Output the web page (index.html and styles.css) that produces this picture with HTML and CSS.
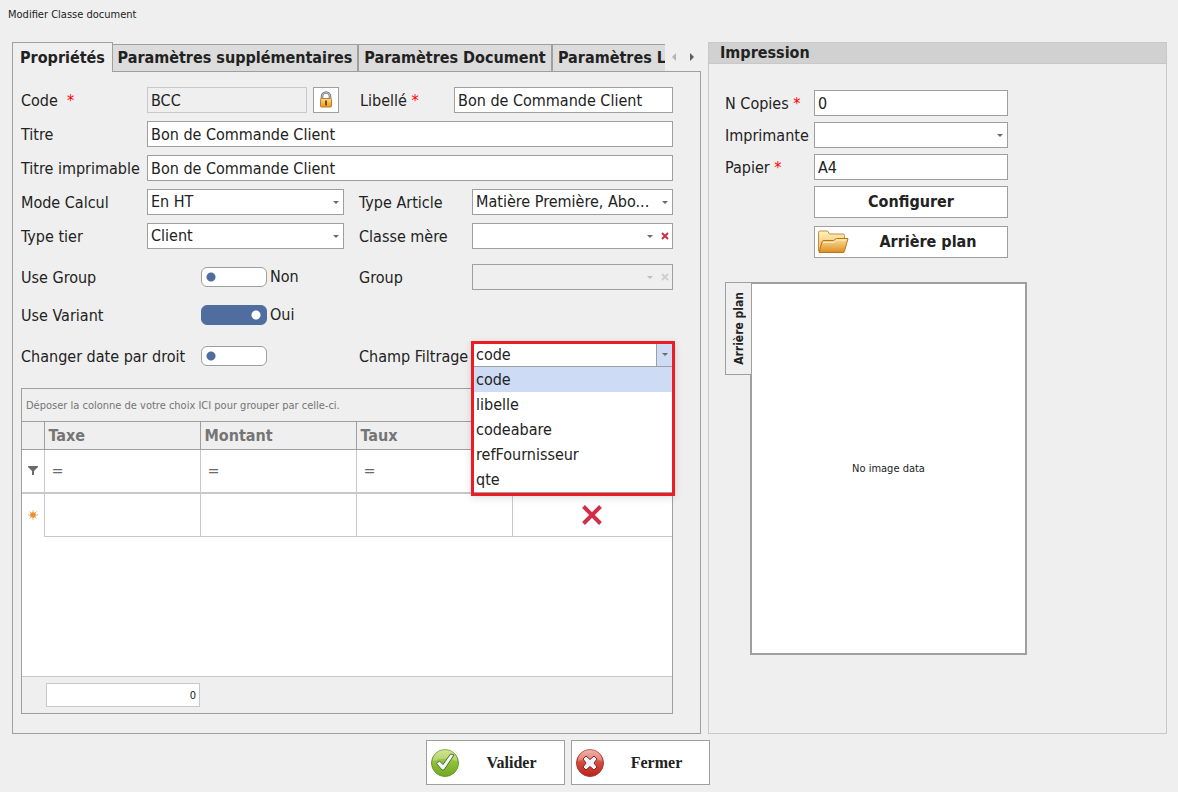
FILE: index.html
```
<!DOCTYPE html>
<html lang="fr">
<head>
<meta charset="utf-8">
<title>Modifier Classe document</title>
<link rel="stylesheet" href="styles.css">
</head>
<body>
<form class="window">
  <h1 class="window-title">Modifier Classe document</h1>
  <main class="panels">
    <section class="left">
      <div class="tabstrip">
        <div class="tabs" role="tablist">
          <button type="button" class="tab tab-first active" role="tab" aria-selected="true">Propriétés</button>
          <button type="button" class="tab tab-wide" role="tab">Paramètres supplémentaires</button>
          <button type="button" class="tab tab-medium" role="tab">Paramètres Document</button>
          <button type="button" class="tab tab-rest" role="tab">Paramètres L</button>
        </div>
        <button type="button" class="nav prev" aria-label="Précédent" disabled></button>
        <button type="button" class="nav next" aria-label="Suivant"></button>
      </div>
      <div class="tab-page">
        <div class="row row-code">
          <label for="code">Code &nbsp;<span class="req">*</span></label>
          <input id="code" class="field" value="BCC" disabled>
          <button type="button" class="lock" aria-label="Verrouiller">
            <svg width="16" height="18" viewBox="0 0 16 18">
              <defs><linearGradient id="gold" x1="0" y1="0" x2="0" y2="1"><stop offset="0" stop-color="#fbdc8c"/><stop offset="1" stop-color="#e59a24"/></linearGradient></defs>
              <path d="M4 9V5.500a4 4 0 0 1 8 0V9" fill="none" stroke="#6d7379" stroke-width="2.600"/>
              <path d="M4 9V5.500a4 4 0 0 1 8 0V9" fill="none" stroke="#c3c8cc" stroke-width="1"/>
              <rect x="2.500" y="7.500" width="11" height="8.500" rx="1" fill="url(#gold)" stroke="#c47b1d"/>
              <path d="M7 9.500h2v5H7z" fill="#7a4b16"/>
            </svg>
          </button>
          <label for="libelle">Libellé <span class="req">*</span></label>
          <input id="libelle" class="field" value="Bon de Commande Client">
        </div>
        <div class="row row-full">
          <label for="titre">Titre</label>
          <input id="titre" class="field" value="Bon de Commande Client">
        </div>
        <div class="row row-full">
          <label for="titre-imp">Titre imprimable</label>
          <input id="titre-imp" class="field" value="Bon de Commande Client">
        </div>
        <div class="row row-pair">
          <label for="mode">Mode Calcul</label>
          <span class="combo"><select id="mode"><option>En HT</option></select></span>
          <label for="article">Type Article</label>
          <span class="combo"><select id="article"><option>Matière Première, Abo...</option></select></span>
        </div>
        <div class="row row-pair">
          <label for="tier">Type tier</label>
          <span class="combo"><select id="tier"><option>Client</option></select></span>
          <label for="mere">Classe mère</label>
          <span class="combo clearable"><select id="mere"><option></option></select><button type="button" class="clear" aria-label="Effacer"><svg width="8" height="8" viewBox="0 0 8 8"><path d="M1 1l6 6M7 1L1 7"/></svg></button></span>
        </div>
        <div class="row row-toggle after-fields">
          <label for="use-group">Use Group</label>
          <span class="switch"><input type="checkbox" id="use-group"><span>Non</span></span>
          <label for="group">Group</label>
          <span class="combo clearable off"><select id="group" disabled><option></option></select><button type="button" class="clear" aria-label="Effacer" disabled><svg width="8" height="8" viewBox="0 0 8 8"><path d="M1 1l6 6M7 1L1 7"/></svg></button></span>
        </div>
        <div class="row row-toggle after-group">
          <label for="use-variant">Use Variant</label>
          <span class="switch"><input type="checkbox" id="use-variant" checked><span>Oui</span></span>
        </div>
        <div class="row row-toggle after-fields">
          <label for="date-droit">Changer date par droit</label>
          <span class="switch"><input type="checkbox" id="date-droit"></span>
          <label for="filtrage">Champ Filtrage</label>
          <div class="dropdown-anchor">
            <div class="dropdown">
              <span class="combo open"><select id="filtrage"><option>code</option><option>libelle</option><option>codeabare</option><option>refFournisseur</option><option>qte</option></select></span>
              <ul class="options" role="listbox" aria-label="Champ Filtrage">
                <li role="option" aria-selected="true">code</li>
                <li role="option">libelle</li>
                <li role="option">codeabare</li>
                <li role="option">refFournisseur</li>
                <li role="option">qte</li>
              </ul>
            </div>
          </div>
        </div>
        <div class="grid">
          <div class="group-panel">Déposer la colonne de votre choix ICI pour grouper par celle-ci.</div>
          <div class="grid-body">
            <table class="taxes">
              <colgroup><col class="c-mark"><col class="c-data"><col class="c-data"><col class="c-data"><col></colgroup>
              <thead><tr><th></th><th>Taxe</th><th>Montant</th><th>Taux</th><th></th></tr></thead>
              <tbody>
                <tr class="filter">
                  <td class="mark"><svg width="10" height="9" viewBox="0 0 10 9"><path d="M0 0h10v1L6 5v4H4V5L0 1z" fill="#6b6b6b"/></svg></td>
                  <td>=</td><td>=</td><td>=</td><td></td>
                </tr>
                <tr class="new">
                  <td class="mark"><svg width="10" height="10" viewBox="0 0 10 10"><g stroke="#f5b26c" stroke-width="1"><path d="M5 0v10M0 5h10M1.500 1.500l7 7M8.500 1.500l-7 7"/></g><circle cx="5" cy="5" r="2.800" fill="#f08f35"/></svg></td>
                  <td></td><td></td><td></td>
                  <td class="delete"><button type="button" aria-label="Supprimer"><svg width="22" height="22" viewBox="0 0 22 22"><path d="M2.500 2.500l17 17M19.500 2.500l-17 17" stroke="#d02f45" stroke-width="4"/></svg></button></td>
                </tr>
              </tbody>
            </table>
          </div>
          <div class="grid-footer"><input class="total" value="0" aria-label="Total Taxe" readonly></div>
        </div>
      </div>
    </section>

    <section class="right">
      <h2 class="right-title">Impression</h2>
      <div class="right-body">
        <div class="print-form">
          <label for="copies">N Copies <span class="req">*</span></label>
          <input id="copies" class="field" value="0">
          <label for="imprimante">Imprimante</label>
          <span class="combo"><select id="imprimante"><option></option></select></span>
          <label for="papier">Papier <span class="req">*</span></label>
          <input id="papier" class="field" value="A4">
          <button type="button" class="action">Configurer</button>
          <button type="button" class="action with-icon">
            <svg width="32" height="26" viewBox="0 0 32 26">
              <defs>
                <linearGradient id="fback" x1="0" y1="0" x2="0" y2="1"><stop offset="0" stop-color="#fff3c0"/><stop offset="1" stop-color="#efb44e"/></linearGradient>
                <linearGradient id="ffront" x1="0" y1="0" x2="0" y2="1"><stop offset="0" stop-color="#fbe09a"/><stop offset="1" stop-color="#dc8d22"/></linearGradient>
              </defs>
              <path d="M1.500 22V3.500Q1.500 2 3 2h7.500l2 3H26q1.500 0 1.500 1.500V10L26 22z" fill="url(#fback)" stroke="#c68c36"/>
              <path d="M2 23.500L5 13q.5-1.500 2-1.500h9.500l3-2H31L27.500 22.200q-.4 1.300-1.500 1.300z" fill="url(#ffront)" stroke="#b87620"/>
              <path d="M6 13.500h11l3-2.500h9" fill="none" stroke="#fff0c4"/>
            </svg>
            <span>Arrière plan</span>
          </button>
        </div>
        <div class="preview">
          <div class="side-tab"><span>Arrière plan</span></div>
          <div class="picture">No image data</div>
        </div>
      </div>
    </section>
  </main>
  <footer class="buttons">
    <button type="submit" class="big">
      <svg width="30" height="30" viewBox="0 0 30 30">
        <defs><linearGradient id="green" x1="0" y1="0" x2="0" y2="1"><stop offset="0" stop-color="#c3dd6a"/><stop offset=".5" stop-color="#8fbf38"/><stop offset="1" stop-color="#6fa822"/></linearGradient></defs>
        <circle cx="15" cy="15" r="13.500" fill="url(#green)" stroke="#6a9a2a"/>
        <path d="M3 13a12 12 0 0 1 24 0q-12-5-24 0z" fill="#fff" opacity=".25"/>
        <path d="M6.500 15.500l3-2.500 3.500 3.500L20.500 6l3.500 1L14 22h-2z" fill="#f4f7fc" stroke="#4d7024"/>
      </svg>
      <span>Valider</span>
    </button>
    <button type="button" class="big">
      <svg width="30" height="30" viewBox="0 0 30 30">
        <defs><linearGradient id="red" x1="0" y1="0" x2="0" y2="1"><stop offset="0" stop-color="#ee9a8c"/><stop offset=".5" stop-color="#d44a3c"/><stop offset="1" stop-color="#b8221c"/></linearGradient></defs>
        <circle cx="15" cy="15" r="13.500" fill="url(#red)" stroke="#a83a30"/>
        <path d="M3 13a12 12 0 0 1 24 0q-12-5-24 0z" fill="#fff" opacity=".25"/>
        <path d="M11 8l4 3.500L19 8l3 3-3 4 3 4-3 3-4-3.500-4 3.500-3-3 3-4-3-4z" fill="#f0f3fa" stroke="#8e231c" stroke-linejoin="round"/>
      </svg>
      <span>Fermer</span>
    </button>
  </footer>
</form>
</body>
</html>
```
FILE: styles.css
```
* { box-sizing: border-box; }

body {
  margin: 0;
  background: #efefef;
  color: #222;
  font: 16px/20px "DejaVu Sans Condensed", Tahoma, sans-serif;
}

button, input, select { font: inherit; color: inherit; margin: 0; border-radius: 0; }
button { padding: 0; border: 0; background: none; }
svg { display: block; }
label { padding-top: 2px; }

.window {
  display: flex;
  flex-direction: column;
  min-height: 100vh;
  padding: 7px 11px 7px 12px;
}
.window-title {
  margin: 0 0 20px -4px;
  font-size: 11px;
  line-height: 15px;
  font-weight: normal;
}
.panels {
  flex: 1;
  display: grid;
  grid-template-columns: 689fr 459fr;
  gap: 7px;
}

/* tabs */
.left { display: flex; flex-direction: column; min-width: 0; }
.tabstrip { display: flex; align-items: center; height: 30px; margin-bottom: -1px; z-index: 1; }
.tabs { display: flex; flex: 1; align-items: flex-end; align-self: stretch; min-width: 0; overflow: hidden; }
.tab {
  flex: none;
  height: 28px;
  border: 1px solid #9f9f9f;
  background: #dcdcdc;
  font-weight: bold;
  white-space: nowrap;
}
.tab-first { width: 101px; }
.tab-wide { width: 245px; border-left: 0; }
.tab-medium { width: 194px; }
.tab-rest { width: 120px; padding-left: 5px; text-align: left; }
.tab.active { height: 30px; border-bottom: 0; background: #efefef; }
.nav { width: 18px; height: 20px; display: flex; align-items: center; justify-content: center; }
.nav::before { content: ""; border: 4px solid transparent; }
.prev::before { border-right-color: #b5b5b5; border-left-width: 0; }
.next::before { border-left-color: #5c5c5c; border-right-width: 0; }

.tab-page {
  flex: 1;
  display: flex;
  flex-direction: column;
  padding: 15px 27px 19px 8px;
  border: 1px solid #9f9f9f;
}

/* form rows */
.row { display: grid; align-items: center; min-height: 26px; margin-bottom: 8px; white-space: nowrap; }
.row-code { grid-template-columns: 126px 160px 6px 26px 21px 94px minmax(0, 1fr); }
.row-code .lock { grid-column: 4; }
.row-code .lock + label { grid-column: 6; }
.row-full { grid-template-columns: 126px minmax(0, 1fr); }
.row-pair { grid-template-columns: 126px minmax(0, 197fr) 15px 113px minmax(0, 201fr); }
.row-pair label:nth-of-type(2) { grid-column: 4; }
.row-toggle { grid-template-columns: 180px minmax(0, 1fr) 113px 201px; }
.row-toggle.after-fields { margin-top: 7px; margin-bottom: 12px; }
.row-toggle.after-group { margin-bottom: 8px; }
.req { color: #f00; }

.field, .combo { width: 100%; height: 26px; border: 1px solid #9f9f9f; background: #fff; }
.field { padding: 0 3px; }
.field:disabled { background: #efefef; border-color: #c8c8c8; }
.combo { position: relative; display: flex; }
.combo select {
  appearance: none;
  flex: 1;
  width: 100%;
  min-width: 0;
  padding: 0 16px 0 3px;
  border: 0;
  background: transparent;
  opacity: 1;
}
.combo::after {
  content: "";
  position: absolute;
  right: 4px;
  top: 11px;
  border: 3px solid transparent;
  border-top-color: #6b6b6b;
  border-bottom: 0;
  pointer-events: none;
}
.combo.clearable::after { right: 19px; }
.clear { width: 15px; display: flex; align-items: center; justify-content: center; }
.clear path { stroke: #d02f45; stroke-width: 2; }
.combo.off { background: #efefef; }
.combo.off::after { border-top-color: #bdbdbd; }
.combo.off .clear path { stroke: #cfcfcf; }

.lock { height: 26px; display: flex; align-items: center; justify-content: center; border: 1px solid #9f9f9f; background: #fff; }

.switch { display: flex; align-items: center; gap: 3px; }
.switch input {
  appearance: none;
  width: 66px;
  height: 20px;
  border: 1px solid #9f9f9f;
  border-radius: 6px;
  background: radial-gradient(circle at 9px 9px, #4f6d9e 4px, #fff 5px);
}
.switch input:checked {
  border-color: #4f6d9e;
  background: radial-gradient(circle at 54px 9px, #fff 4px, #4f6d9e 5px);
}

/* open drop-down */
.dropdown-anchor { position: relative; height: 26px; }
.dropdown {
  position: absolute;
  z-index: 2;
  top: -2px;
  left: -1px;
  right: -2px;
  border: 3px solid #ed1c24;
  background: #fff;
  box-shadow: 0 2px 8px rgba(0, 0, 0, .12);
}
.combo.open { height: 23px; border-width: 0 0 1px; background: linear-gradient(#cddbf5, #cddbf5) right / 15px no-repeat; }
.combo.open::before { content: ""; position: absolute; right: 15px; top: 0; bottom: 0; border-left: 1px solid #9f9f9f; }
.combo.open::after { top: 9px; }
.combo.open select { padding-left: 2px; }
.options { margin: 0; padding: 0; list-style: none; border-bottom: 1px solid #9f9f9f; }
.options li { height: 25px; padding: 0 2px; line-height: 26px; }
.options [aria-selected] { background: #cddbf5; }

/* data grid */
.grid { flex: 1; display: flex; flex-direction: column; margin-top: 7px; border: 1px solid #9f9f9f; }
.group-panel { height: 32px; padding-left: 4px; line-height: 34px; font-size: 11px; color: #757575; }
.grid-body { flex: 1; background: #fff; }
.taxes { width: 100%; table-layout: fixed; border-collapse: collapse; }
.c-mark { width: 22px; }
.c-data { width: 24%; }
.taxes th {
  height: 28px;
  padding: 0 4px;
  border: 1px solid #9f9f9f;
  background: #efefef;
  color: #757575;
  text-align: left;
}
.taxes td { height: 43px; padding: 0 7px; border: 1px solid #c8c8c8; color: #6b6b6b; }
.taxes th:first-child, .taxes td:first-child { border-left: 0; }
.taxes th:last-child, .taxes td:last-child { border-right: 0; }
.taxes .filter td { border-bottom-width: 2px; border-top-color: #9f9f9f; }
.taxes .new td { height: 44px; }
.taxes .new .mark { border-bottom: 0; }
.taxes .mark { padding: 0 6px; }
.taxes .delete { padding: 0; }
.delete button { display: block; margin: 0 auto; }
.grid-footer { height: 37px; padding: 6px 24px; border-top: 1px solid #c8c8c8; }
.total { display: block; width: 154px; height: 24px; padding: 0 3px; border: 1px solid #c8c8c8; background: #fff; text-align: right; font-size: 11px; }

/* print panel */
.right { border: 1px solid #c8c8c8; min-width: 0; }
.right-title { margin: 0; padding-left: 11px; border-bottom: 1px solid #c8c8c8; background: #d1d1d1; font-size: 16px; line-height: 20px; }
.right-body { padding: 26px 16px; }
.print-form { display: grid; grid-template-columns: 89px 194px; gap: 6px 0; align-items: center; white-space: nowrap; }
.action {
  grid-column: 2;
  display: flex;
  align-items: center;
  justify-content: center;
  height: 32px;
  border: 1px solid #9f9f9f;
  background: #fff;
  font-weight: bold;
}
.with-icon { margin-top: 2px; padding-left: 2px; }
.with-icon span { flex: 1; }
.preview { display: flex; align-items: flex-start; margin-top: 24px; }
.side-tab {
  z-index: 1;
  display: flex;
  align-items: center;
  justify-content: center;
  width: 26px;
  height: 93px;
  border: 1px solid #9f9f9f;
  border-right: 0;
  background: #efefef;
  font-size: 12px;
  font-weight: bold;
  white-space: nowrap;
}
.side-tab span { writing-mode: vertical-rl; transform: rotate(180deg); }
.picture {
  display: flex;
  align-items: center;
  justify-content: center;
  width: 277px;
  height: 373px;
  margin-left: -1px;
  border: 2px solid #9f9f9f;
  background: #fff;
  font-size: 11px;
}

.buttons { display: flex; justify-content: center; gap: 6px; margin-top: 6px; padding-right: 44px; }
.big {
  display: flex;
  align-items: center;
  width: 139px;
  height: 45px;
  padding-left: 3px;
  border: 1px solid #9f9f9f;
  background: #fff;
  font: bold 16px "Liberation Serif", serif;
}
.big span { flex: 1; }
```
